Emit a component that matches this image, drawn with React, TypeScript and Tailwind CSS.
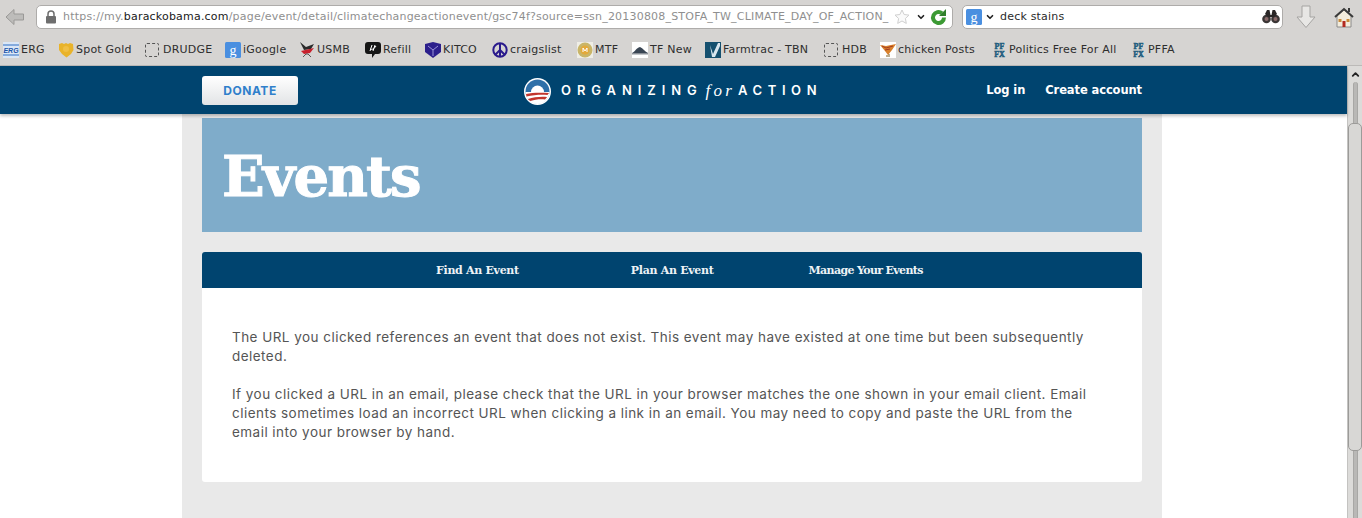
import React from 'react';
import { ChevronDown, ChevronUp } from 'lucide-react';

const GoogleIcon = ({ size = 16 }: { size?: number }) => (
  <svg width={size} height={size} viewBox="0 0 16 16" className="shrink-0">
    <rect width="16" height="16" rx="1.5" fill="#4a8fe0" />
    <text x="8" y="12.700" textAnchor="middle" fontSize="14" fontFamily="Liberation Serif" fill="#fff">g</text>
  </svg>
);

const Dashed = () => <span className="w-[14px] h-[14px] mr-[2px] shrink-0 rounded-[2px] border border-dashed border-[#555]" />;

const ErgIcon = () => (
  <svg width="16" height="16" viewBox="0 0 16 16" className="shrink-0">
    <rect width="16" height="16" fill="#dbe7f6" />
    <path d="M0 3h16M0 13h16" stroke="#2f6fc4" strokeWidth="1" />
    <text x="8" y="11" textAnchor="middle" fontSize="7" fontWeight="700" fontStyle="italic" fontFamily="Liberation Sans" fill="#1d55a8">ERG</text>
  </svg>
);

const GoldIcon = () => (
  <svg width="16" height="16" viewBox="0 0 16 16" className="shrink-0">
    <path d="M1 2l3-1 2 1 2-1 2 1 2-1 3 1 .5 6-2.500 4-4.500 3.500L4 12 1 8z" fill="#e9b32a" />
    <circle cx="8" cy="7" r="3" fill="#f0bf45" />
  </svg>
);

const UsmbIcon = () => (
  <svg width="16" height="16" viewBox="0 0 16 16" className="shrink-0">
    <path d="M1 0l6 5 8-3-3 5-7 1z" fill="#2a2a2a" />
    <path d="M2 9l13-3-4 5-6 1z" fill="#c8202c" />
    <path d="M4 15l3-3 2 0 3 3" stroke="#555" fill="none" />
  </svg>
);

const RefillIcon = () => (
  <svg width="16" height="16" viewBox="0 0 16 16" className="shrink-0">
    <path d="M3 0h10a3 3 0 013 3v6a3 3 0 01-3 3h-3l-3 4v-4H3a3 3 0 01-3-3V3a3 3 0 013-3z" fill="#151515" />
    <path d="M5 9l2-6M8 9l2-6M5 7c2 1 4 0 6-3" stroke="#fff" strokeWidth="1" fill="none" />
  </svg>
);

const KitcoIcon = () => (
  <svg width="16" height="16" viewBox="0 0 16 16" className="shrink-0">
    <path d="M0 2l8-2 8 2v8l-8 6-8-6z" fill="#2c1f8c" />
    <path d="M3 4l5 4 5-4M8 8v6" stroke="#9a94d8" strokeWidth="1" fill="none" />
  </svg>
);

const PeaceIcon = () => (
  <svg width="16" height="16" viewBox="0 0 16 16" className="shrink-0" fill="none" stroke="#2a1a8c" strokeWidth="2">
    <circle cx="8" cy="8" r="6.7" />
    <path d="M8 1v14M8 8l-5 5M8 8l5 5" />
  </svg>
);

const MtfIcon = () => (
  <svg width="16" height="16" viewBox="0 0 16 16" className="shrink-0">
    <rect width="16" height="16" fill="#efeee6" />
    <circle cx="8" cy="8" r="7.5" fill="#c9b568" />
    <circle cx="8" cy="8" r="4.5" fill="#e3a93a" />
    <path d="M6 10V6l2 3 2-3v4" stroke="#fff" fill="none" />
  </svg>
);

const TfIcon = () => (
  <svg width="16" height="16" viewBox="0 0 16 16" className="shrink-0">
    <rect width="16" height="16" fill="#fff" />
    <path d="M0 11c3-1 4-5 8-6 3 1 5 5 8 6z" fill="#3a4654" />
    <rect y="11" width="16" height="1.5" fill="#8a8f96" />
  </svg>
);

const FarmIcon = () => (
  <svg width="16" height="16" viewBox="0 0 16 16" className="shrink-0">
    <rect width="16" height="16" fill="#15506f" />
    <path d="M5 3l3 9 5-11h2v3l-5 11H7z" fill="#d9e6ee" />
  </svg>
);

const ChickenIcon = () => (
  <svg width="16" height="16" viewBox="0 0 16 16" className="shrink-0">
    <rect width="16" height="16" fill="#fff" />
    <path d="M0 3l6 1 10-2-4 6-4 5-3-4z" fill="#d9812c" />
    <path d="M2 4l4 2 7-2M5 8l5-1" stroke="#a33a20" fill="none" />
    <path d="M7 13v2M9 12v3" stroke="#7a5a20" />
  </svg>
);

const PfIcon = () => (
  <svg width="15" height="16" viewBox="0 0 15 16" className="shrink-0">
    <text x="7.500" y="7" textAnchor="middle" fontSize="8" fontWeight="700" fontFamily="Liberation Serif" fill="#1e5c7e" stroke="#1e5c7e" strokeWidth="0.5">PF</text>
    <text x="7.500" y="14.500" textAnchor="middle" fontSize="8" fontWeight="700" fontFamily="Liberation Serif" fill="#1e5c7e" stroke="#1e5c7e" strokeWidth="0.5">FX</text>
  </svg>
);

const bookmarks: { icon: React.ReactNode; label: string; width: string }[] = [
  { icon: <ErgIcon />, label: 'ERG', width: 'w-[55px]' },
  { icon: <GoldIcon />, label: 'Spot Gold', width: 'w-[87px]' },
  { icon: <Dashed />, label: 'DRUDGE', width: 'w-[80px]' },
  { icon: <GoogleIcon />, label: 'iGoogle', width: 'w-[74px]' },
  { icon: <UsmbIcon />, label: 'USMB', width: 'w-[66px]' },
  { icon: <RefillIcon />, label: 'Refill', width: 'w-[60px]' },
  { icon: <KitcoIcon />, label: 'KITCO', width: 'w-[67px]' },
  { icon: <PeaceIcon />, label: 'craigslist', width: 'w-[85px]' },
  { icon: <MtfIcon />, label: 'MTF', width: 'w-[55px]' },
  { icon: <TfIcon />, label: 'TF New', width: 'w-[73px]' },
  { icon: <FarmIcon />, label: 'Farmtrac - TBN', width: 'w-[119px]' },
  { icon: <Dashed />, label: 'HDB', width: 'w-[56px]' },
  { icon: <ChickenIcon />, label: 'chicken Posts', width: 'w-[112px]' },
  { icon: <PfIcon />, label: 'Politics Free For All', width: 'w-[139px]' },
  { icon: <PfIcon />, label: 'PFFA', width: 'w-[60px]' },
];

const Bookmark = ({ icon, label, width }: { icon: React.ReactNode; label: string; width: string }) => (
  <div className={`flex items-center gap-[2px] shrink-0 ${width}`}>
    {icon}
    <span className="whitespace-nowrap tracking-[0.22px]">{label}</span>
  </div>
);

const ObamaLogo = () => (
  <svg width="27" height="27" viewBox="0 0 27 27" className="shrink-0">
    <circle cx="13.500" cy="13.500" r="13.500" fill="#fff" />
    <circle cx="13.500" cy="13.500" r="12" fill="#2e6fa8" />
    <path d="M7 14a6.500 6.500 0 0113 0z" fill="#fff" />
    <path d="M1.500 14h24a12 12 0 01-24 0z" fill="#fff" />
    <path d="M2 16c6-1.500 14-1.500 23-1-1 1-1 1.500-1.500 2-7-.5-14 0-21 1.500zM4 21c6-2 13-2.500 19-2-.5 1-1 1.500-2 2.500-5-.5-10 0-14.500 1.500-1-.5-2-1-2.500-2z" fill="#c2352d" />
  </svg>
);

const Binoculars = () => (
  <svg width="18" height="14" viewBox="0 0 18 14" className="shrink-0">
    <circle cx="4.500" cy="9" r="4.300" fill="#3a3535" />
    <circle cx="13.500" cy="9" r="4.300" fill="#3a3535" />
    <path d="M3 4l2-4h2.500l1 5h1l1-5H13l2 4-3 3H6z" fill="#2a2626" />
    <circle cx="4.500" cy="9" r="2" fill="#8a6a6a" />
    <circle cx="13.500" cy="9" r="2" fill="#8a6a6a" />
  </svg>
);

const HomeIcon = () => (
  <svg width="20" height="21" viewBox="0 0 20 21" className="shrink-0">
    <path d="M3 9l7-6 7 6v11H3z" fill="#f3ecdc" stroke="#8a8a8a" />
    <path d="M1 10l9-8 9 8" fill="none" stroke="#3a3a3a" strokeWidth="2" />
    <rect x="14" y="1" width="2" height="4" fill="#3a3a3a" />
    <rect x="8.500" y="14" width="3" height="6" fill="#b32a20" />
    <rect x="4.500" y="12" width="3" height="3" fill="#c98a3a" />
    <rect x="12.500" y="12" width="3" height="3" fill="#c98a3a" />
  </svg>
);

const Chrome = () => (
  <div className="h-[66px] shrink-0 bg-[#d6d4d2] text-[11px] text-[#2e2e2e] font-['DejaVu_Sans',sans-serif]">
    <div className="h-[34px] flex items-center">
      <svg width="20" height="18" viewBox="0 0 20 18" className="ml-[5px] shrink-0">
        <path d="M9 1.500L1 9l8 7.500V12h9.500V6H9z" fill="#bdbcba" stroke="#9a9997" />
      </svg>
      <div className="ml-[11px] w-[917px] h-[24px] flex items-center bg-white rounded-[5px] border border-[#aeacaa] pl-[8px] pr-[2px]">
        <svg width="12" height="14" viewBox="0 0 12 14" className="shrink-0">
          <rect x="1" y="6" width="10" height="7.500" rx="1" fill="#6e6e6e" />
          <path d="M3 6V4a3 3 0 016 0v2" fill="none" stroke="#6e6e6e" strokeWidth="1.500" />
        </svg>
        <div className="ml-[6px] pt-[1px] text-[#8f8f8f] whitespace-nowrap tracking-[0.2px]">
          https://my.<span className="text-[#1a1a1a]">barackobama.com</span>/page/event/detail/climatechangeactionevent/gsc74f?source=ssn_20130808_STOFA_TW_CLIMATE_DAY_OF_ACTION_
        </div>
        <svg width="16" height="16" viewBox="0 0 16 16" className="ml-[5px] shrink-0">
          <path d="M8 1l2.100 4.500 4.900.6-3.600 3.400.9 4.900L8 12l-4.300 2.400.9-4.900L1 6.100l4.900-.6z" fill="#fafafa" stroke="#d0d0d0" />
        </svg>
        <ChevronDown size={10} strokeWidth={4} className="ml-[6px] text-[#222] shrink-0" />
        <svg width="17" height="17" viewBox="0 0 17 17" className="ml-[4px] shrink-0">
          <path d="M14 8.500a5.500 5.500 0 11-2-4.200" fill="none" stroke="#3c9a34" strokeWidth="4" />
          <path d="M9 7h7V0z" fill="#2f7f2a" />
        </svg>
      </div>
      <div className="ml-[9px] w-[321px] h-[24px] flex items-center bg-white rounded-[5px] border border-[#aeacaa] pl-[3px] pr-[2px]">
        <GoogleIcon />
        <ChevronDown size={10} strokeWidth={4} className="ml-[3px] text-[#222] shrink-0" />
        <span className="ml-[5px] pt-[1px] text-[#2a2a2a] tracking-[0.2px]">deck stains</span>
        <div className="ml-auto"><Binoculars /></div>
      </div>
      <svg width="20" height="24" viewBox="0 0 20 24" className="ml-[13px] shrink-0">
        <path d="M6 1h8v11h5l-9 10.500L1 12h5z" fill="#e8e7e5" stroke="#a5a4a2" />
      </svg>
      <div className="ml-[18px]"><HomeIcon /></div>
    </div>
    <div className="h-[32px] flex items-center pl-[3px] pt-[1px] border-b border-[#bcbab8]">
      {bookmarks.map((b) => (
        <Bookmark key={b.label} icon={b.icon} label={b.label} width={b.width} />
      ))}
    </div>
  </div>
);

const Scrollbar = () => (
  <div className="w-[15px] shrink-0 bg-[#dcdbd9] flex flex-col items-center border-l border-[#c4c3c1]">
    <ChevronUp size={11} strokeWidth={4} className="mt-[3px] text-[#222]" />
    <div className="w-[5px] h-[41px] mt-[2px] rounded-t-[3px] bg-[#b9b8b6] border-x border-[#a8a7a5]" />
    <div className="w-[14px] h-[328px] shrink-0 rounded-[5px] bg-[#d8d7d5] border border-[#9c9b99]" />
    <div className="w-[5px] flex-1 bg-[#b9b8b6] border-x border-[#a8a7a5]" />
  </div>
);

const TopBar = () => (
  <div className="h-[48px] shrink-0 bg-[#00446f] shadow-[0_2px_3px_rgba(0,0,0,0.25)] relative z-10 font-['Inter',sans-serif]">
    <div className="w-[940px] ml-[202px] h-full flex items-center justify-between">
      <div className="w-[96px] h-[29px] pt-[1px] rounded-[3px] bg-gradient-to-b from-white to-[#e2e4e6] flex items-center justify-center text-[12px] font-bold tracking-[0.55px] text-[#2f7fcb]">
        DONATE
      </div>
      <div className="flex items-center ml-[62px] pt-[2px]">
        <ObamaLogo />
        <span className="ml-[10px] text-[13px] font-semibold tracking-[5.9px] text-white whitespace-nowrap">ORGANIZING</span>
        <span className="ml-[3px] text-[17px] italic tracking-[3.2px] text-white font-['Liberation_Serif',serif]">for</span>
        <span className="ml-[3px] text-[13px] font-semibold tracking-[5.6px] text-white whitespace-nowrap">ACTION</span>
      </div>
      <div className="flex items-center gap-[20px] pt-[2px] text-[11.5px] font-semibold text-white font-['DejaVu_Sans',sans-serif] tracking-[-0.1px]">
        <span>Log in</span>
        <span>Create account</span>
      </div>
    </div>
  </div>
);

const Content = () => (
  <div className="w-[980px] ml-[182px] flex-1 bg-[#e9e9e9] px-[20px] pt-[4px]">
    <div className="h-[114px] pt-[2px] bg-[#7facca] flex items-center pl-[20px]">
      <h1 className="text-[56px] leading-none font-bold text-white font-['DejaVu_Serif',serif] tracking-[-1.9px] [-webkit-text-stroke:1px_white]">Events</h1>
    </div>
    <div className="mt-[20px] h-[36px] pt-[2px] rounded-t-[3px] bg-[#00446f] flex items-center text-[11px] font-bold text-[#eef3f6] font-['DejaVu_Serif',serif] tracking-[-0.3px] whitespace-nowrap">
      <span className="ml-[234px]">Find An Event</span>
      <span className="ml-[112px]">Plan An Event</span>
      <span className="ml-[95px] tracking-[-0.65px]">Manage Your Events</span>
    </div>
    <div className="h-[194px] rounded-b-[3px] bg-white pl-[30px] pr-[50px] pt-[40px] text-[13.5px] leading-[19px] tracking-[0.46px] text-[#555555] font-['Inter',sans-serif]">
      <p>The URL you clicked references an event that does not exist. This event may have existed at one time but been subsequently deleted.</p>
      <p className="mt-[19px]">If you clicked a URL in an email, please check that the URL in your browser matches the one shown in your email client. Email clients sometimes load an incorrect URL when clicking a link in an email. You may need to copy and paste the URL from the email into your browser by hand.</p>
    </div>
    <div className="h-[36px]" />
  </div>
);

export default function App() {
  return (
    <div className="h-[518px] w-[1362px] overflow-hidden flex flex-col bg-white">
      <Chrome />
      <div className="flex-1 flex min-h-0">
        <div className="flex-1 flex flex-col min-w-0">
          <TopBar />
          <Content />
        </div>
        <Scrollbar />
      </div>
    </div>
  );
}
